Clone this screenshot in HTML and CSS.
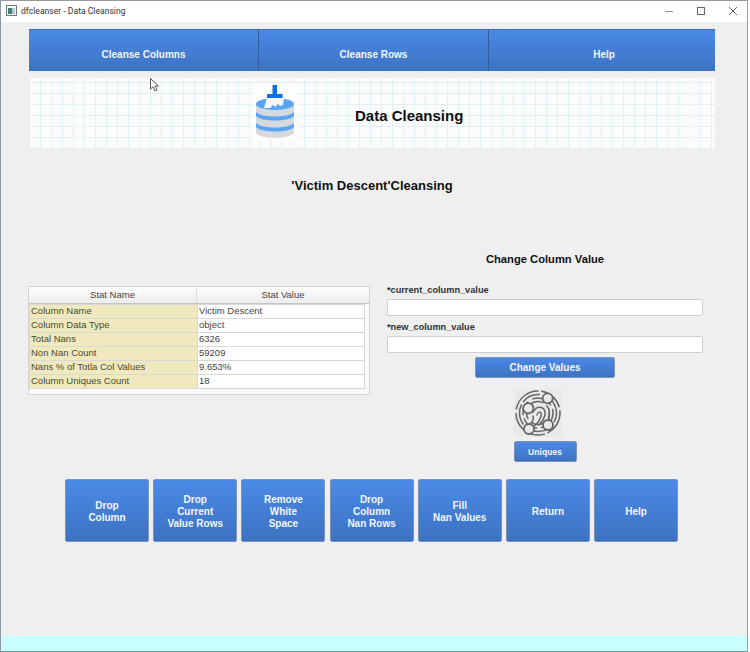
FILE: index.html
```html
<!DOCTYPE html>
<html lang="en">
<head>
    <meta charset="UTF-8">
    <title>dfcleanser - Data Cleansing</title>
    <link rel="stylesheet" href="styles.css">
</head>
<body>
<div class="window">
    <div class="titlebar">
        <svg class="app-icon" width="11" height="11" viewBox="0 0 11 11">
            <rect x="0.5" y="0.5" width="10" height="10" fill="#f4f4f4" stroke="#777"/>
            <rect x="2" y="3" width="4" height="6" fill="#3d7f7a"/>
            <rect x="6" y="3" width="3" height="6" fill="#b9c6cf"/>
        </svg>
        <span class="title-text">dfcleanser - Data Cleansing</span>
        <div class="win-controls">
            <svg width="10" height="10" viewBox="0 0 10 10"><path d="M1 5.500H9" stroke="#999"/></svg>
            <svg width="10" height="10" viewBox="0 0 10 10"><rect x="1.500" y="1.500" width="7" height="7" fill="none" stroke="#666"/></svg>
            <svg width="10" height="10" viewBox="0 0 10 10"><path d="M1 1L9 9M9 1L1 9" stroke="#666"/></svg>
        </div>
    </div>

    <div class="content">
        <nav class="topnav">
            <a class="nav-item">Cleanse Columns</a>
            <a class="nav-item">Cleanse Rows</a>
            <a class="nav-item">Help</a>
        </nav>

        <div class="banner">
            <svg class="db-icon" width="45" height="57" viewBox="0 0 45 57">
                <rect width="45" height="57" fill="#fdfdfd"/>
                <rect x="3" y="21" width="38" height="28" fill="#d5d8dd"/>
                <ellipse cx="22" cy="49" rx="19" ry="6" fill="#d5d8dd"/>
                <ellipse cx="22" cy="21" rx="19" ry="6" fill="#58a6f3"/>
                <path d="M3 29C8 35 36 35 41 29V33C36 39 8 39 3 33Z" fill="#58a6f3"/>
                <path d="M3 40C8 46 36 46 41 40V44C36 50 8 50 3 44Z" fill="#58a6f3"/>
                <path d="M14 15H31L30 22L27 23L25 21L22 24L20 22L17 25L11 25Z" fill="#f4f7fa"/>
                <rect x="19.500" y="2" width="4.500" height="10" fill="#0f6fe6"/>
                <rect x="14" y="11" width="15.500" height="4" fill="#0f6fe6"/>
            </svg>
            <h1 class="banner-title">Data Cleansing</h1>
        </div>

        <h2 class="page-heading">'Victim Descent'Cleansing</h2>

        <div class="main-row">
            <div class="stats-panel">
                <div class="stats-head">
                    <div class="stats-head-cell name">Stat Name</div>
                    <div class="stats-head-cell">Stat Value</div>
                </div>
                <table class="stats-table">
                    <tr><th>Column Name</th><td>Victim Descent</td></tr>
                    <tr><th>Column Data Type</th><td>object</td></tr>
                    <tr><th>Total Nans</th><td>6326</td></tr>
                    <tr><th>Non Nan Count</th><td>59209</td></tr>
                    <tr><th>Nans % of Totla Col Values</th><td>9.653%</td></tr>
                    <tr><th>Column Uniques Count</th><td>18</td></tr>
                </table>
            </div>

            <form class="change-form">
                <h3 class="form-title">Change Column Value</h3>
                <label class="field-label" for="current_column_value">*current_column_value</label>
                <input class="field-input" type="text" id="current_column_value">
                <label class="field-label second" for="new_column_value">*new_column_value</label>
                <input class="field-input" type="text" id="new_column_value">
                <button class="btn change-btn" type="button">Change Values</button>
                <svg class="print-icon" width="48" height="48" viewBox="0 0 48 48" fill="none" stroke="#666" stroke-width="1.500" stroke-linecap="round">
                    <rect width="48" height="48" fill="#e9e9e9" stroke="none"/>
                    <circle cx="24" cy="24" r="22" stroke-dasharray="24 4 40 5 30 4"/>
                    <circle cx="24" cy="24" r="18.500" stroke-dasharray="18 5 26 6 20 4" stroke-dashoffset="9"/>
                    <circle cx="24" cy="24" r="15" stroke-dasharray="14 6 20 5 16 4" stroke-dashoffset="20"/>
                    <circle cx="24" cy="24" r="11.500" stroke-dasharray="9 6 14 5" stroke-dashoffset="4"/>
                    <path d="M19 23C24 15 32 18 31 26C30 30 28 33 25 36"/>
                    <path d="M23 26C25 21 28 23 27 27C26 31 23 35 20 37"/>
                    <path d="M19 27C20 30 19 32 17 34"/>
                    <path d="M35 24C36 27 35 29 35 30"/>
                    <g stroke-width="1.800" fill="#e9e9e9">
                        <circle cx="33.700" cy="9.300" r="5"/>
                        <circle cx="14.300" cy="19.300" r="5.200"/>
                        <circle cx="15" cy="40" r="5"/>
                        <circle cx="34" cy="36" r="5"/>
                    </g>
                </svg>
                <button class="btn uniques-btn" type="button">Uniques</button>
            </form>
        </div>

        <div class="action-row">
            <button class="btn action-btn" type="button">Drop<br>Column</button>
            <button class="btn action-btn" type="button">Drop<br>Current<br>Value Rows</button>
            <button class="btn action-btn" type="button">Remove<br>White<br>Space</button>
            <button class="btn action-btn" type="button">Drop<br>Column<br>Nan Rows</button>
            <button class="btn action-btn" type="button">Fill<br>Nan Values</button>
            <button class="btn action-btn" type="button">Return</button>
            <button class="btn action-btn" type="button">Help</button>
        </div>
    </div>

    <div class="status-band"></div>

    <!-- mouse pointer caught in the screenshot -->
    <svg class="pointer" width="10" height="14" viewBox="0 0 10 14">
        <path d="M0.500 0.500V11L3 8.800L5 13L7 12L5 8H8.500Z" fill="#fff" stroke="#555"/>
    </svg>
</div>
</body>
</html>
```

FILE: styles.css
```css
* {
    box-sizing: border-box;
}
html, body {
    margin: 0;
    padding: 0;
    background-color: #fff;
}
.window {
    position: relative;
    width: 748px;
    height: 652px;
    display: flex;
    flex-direction: column;
    background-color: #EFEFEF;
    border-top: 1px solid #9a9a9a;
    border-left: 1px solid #8f98a3;
    border-right: 1px solid #9a9a9a;
    border-bottom: 1px solid #6f9a9c;
    font-family: "Liberation Sans", Arial, sans-serif;
}
.titlebar {
    height: 21px;
    flex-shrink: 0;
    display: flex;
    align-items: center;
    padding-left: 5px;
    padding-bottom: 2px;
    background-color: #fff;
}
.app-icon {
    margin-right: 4px;
}
.title-text {
    font-family: Roboto, sans-serif;
    font-size: 8.600px;
    color: #333;
}
.win-controls {
    margin-left: auto;
    display: flex;
    gap: 22px;
    padding-right: 9px;
}
.content {
    flex: 1;
    padding: 7px 32px 0 28px;
}
.topnav {
    display: flex;
    height: 42px;
    width: 686px;
    overflow: hidden;
    background: linear-gradient(#4a8ae6, #3d72c2);
    border-top: 1px solid #3c6cb0;
}
.nav-item {
    flex: 0 0 230px;
    display: flex;
    align-items: center;
    justify-content: center;
    padding-top: 7px;
    font-size: 10px;
    font-weight: bold;
    color: #f2f6fd;
    border-right: 1px solid #305d9e;
}
.nav-item:last-child {
    border-right: none;
}
.banner {
    width: 686px;
    height: 71px;
    margin-top: 7px;
    display: flex;
    align-items: flex-start;
    padding-top: 5px;
    padding-left: 224px;
    background-color: #fbfdfd;
    background-image:
        linear-gradient(#fbfdfd, #fbfdfd),
        linear-gradient(#fbfdfd, #fbfdfd),
        repeating-linear-gradient(90deg, #e2f1f3 0, #e2f1f3 1px, transparent 1px, transparent 11px),
        repeating-linear-gradient(0deg, #e2eff1 0, #e2eff1 1px, transparent 1px, transparent 11px);
    background-size: 2px 100%, 2px 100%, auto, auto;
    background-position: 50px 0, 660px 0, 0 0, 0 0;
    background-repeat: no-repeat, no-repeat, repeat, repeat;
}
.banner-title {
    margin: 24px 0 0 57px;
    font-size: 15px;
    font-weight: bold;
    color: #111;
}
.page-heading {
    margin: 29px 0 0 0;
    width: 686px;
    text-align: center;
    font-size: 13px;
    line-height: 16px;
    font-weight: bold;
    color: #111;
}
.main-row {
    display: flex;
    align-items: flex-start;
    height: 285px;
}
.stats-panel {
    width: 342px;
    height: 109px;
    margin-top: 92px;
    margin-left: -1px;
    background-color: #fafafa;
    border: 1px solid #d4d4d4;
}
.stats-head {
    display: flex;
    height: 17px;
    background: linear-gradient(#fdfdfd, #ececec);
    border-bottom: 1px solid #c4c4c4;
}
.stats-head-cell {
    flex: 1;
    text-align: center;
    font-size: 9.500px;
    line-height: 15px;
    color: #444;
}
.stats-head-cell.name {
    flex: none;
    width: 168px;
    border-right: 1px solid #ddd;
}
.stats-table {
    width: 336px;
    border-collapse: collapse;
    table-layout: fixed;
    background-color: #fff;
}
.stats-table th, .stats-table td {
    height: 14px;
    padding: 0 1px;
    font-size: 9.500px;
    line-height: 12px;
    font-weight: normal;
    text-align: left;
    vertical-align: top;
    color: #444;
    border: 1px solid #d8d8d8;
}
.stats-table th {
    width: 168px;
    background-color: #f0e9bd;
    color: #4c4a2a;
}
.change-form {
    width: 316px;
    margin-left: 17px;
    margin-top: 57px;
    display: flex;
    flex-direction: column;
    align-items: center;
}
.form-title {
    margin: 0 0 17px 0;
    font-size: 11.200px;
    line-height: 16px;
    font-weight: bold;
    color: #111;
}
.field-label {
    align-self: flex-start;
    font-size: 9.200px;
    line-height: 13px;
    font-weight: bold;
    color: #333;
    margin-bottom: 2px;
}
.field-label.second {
    margin-top: 5px;
}
.field-input {
    width: 316px;
    height: 17px;
    padding: 0 4px;
    background-color: #fff;
    border: 1px solid #cfcfcf;
    border-radius: 2px;
}
.btn {
    display: block;
    padding: 0;
    background: linear-gradient(#4a8ae6, #3d72c2);
    border: 1px solid #7d93b5;
    border-radius: 2px;
    font-family: "Liberation Sans", Arial, sans-serif;
    font-weight: bold;
    color: #f2f6fd;
}
.change-btn {
    width: 140px;
    height: 21px;
    margin-top: 4px;
    font-size: 10px;
}
.print-icon {
    margin-top: 11px;
    margin-right: 14px;
}
.uniques-btn {
    width: 63px;
    height: 21px;
    margin-top: 4px;
    font-size: 8.600px;
}
.action-row {
    display: flex;
    gap: 4.200px;
    margin-left: 36px;
}
.action-btn {
    width: 84px;
    height: 63px;
    padding-top: 2px;
    font-size: 10px;
    line-height: 12px;
}
.status-band {
    height: 15px;
    flex-shrink: 0;
    background-color: #C8FFFF;
}
.pointer {
    position: absolute;
    left: 149px;
    top: 77px;
}
```
